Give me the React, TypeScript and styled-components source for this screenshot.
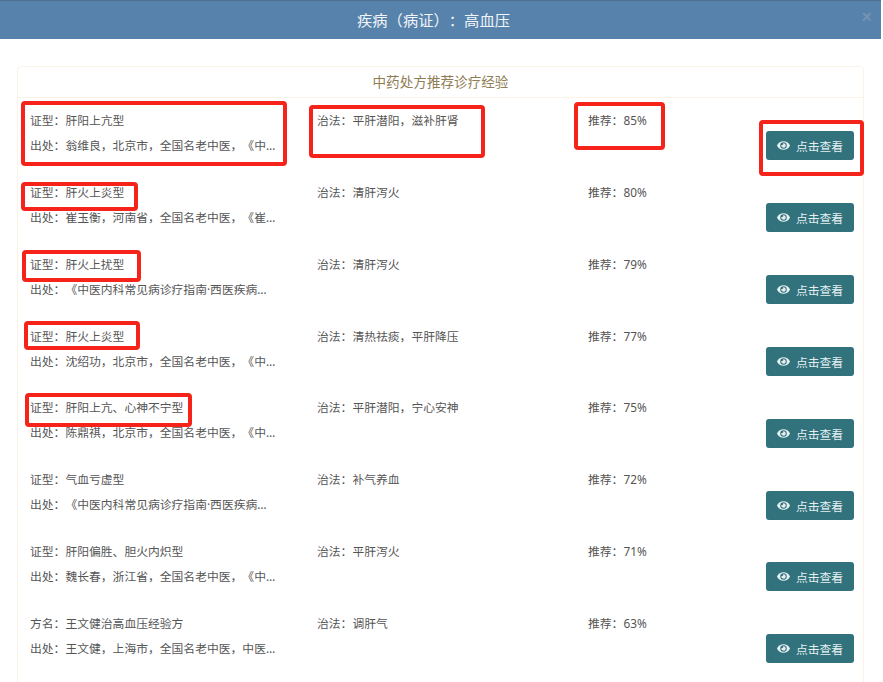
import React from 'react'
import styled, { createGlobalStyle } from 'styled-components'
import { FaEye } from 'react-icons/fa'

const GlobalStyle = createGlobalStyle`
  html, body { margin: 0; padding: 0; height: 100%; background: #fff; overflow: hidden; }
  body {
    font-family: "Noto Sans", "Noto Sans CJK SC", "Liberation Sans", sans-serif;
    color: #555;
    text-spacing-trim: space-all;
  }
`

const Page = styled.div`
  position: relative;
  width: 883px;
  height: 682px;
  overflow: hidden;
  background: #fff;
`

const Header = styled.header`
  position: relative;
  box-sizing: border-box;
  width: 881px;
  height: 39px;
  padding-right: 14px;
  border-top: 1px solid #4f6f8f;
  background: #5682ab;
  color: #f2f5f8;
  font-size: 15.3px;
  line-height: 38px;
  text-align: center;
`

const Close = styled.span`
  position: absolute;
  top: 5px;
  right: 9px;
  font-family: "Liberation Sans", sans-serif;
  font-size: 18px;
  line-height: 22px;
  font-weight: 700;
  color: #7393b3;
`

const Body = styled.main`
  padding: 27px 19px 0 17px;
`

const Card = styled.section`
  box-sizing: border-box;
  height: 640px;
  border: 1px solid #faf3e6;
  border-radius: 4px;
`

const CardTitle = styled.h2`
  margin: 0;
  height: 30px;
  border-bottom: 1px solid #faf3e6;
  color: #8f7d54;
  font-size: 13.6px;
  font-weight: 400;
  line-height: 29px;
  text-align: center;
`

const Row = styled.div`
  display: grid;
  grid-template-columns: 287px 271px 1fr auto;
  box-sizing: border-box;
  height: 71.85px;
  padding: 10px 9px 0 12px;
  font-size: 11.8px;
  line-height: 25px;
`

const Cell = styled.div`
  min-width: 0;
`

const Source = styled.div`
  width: 246px;
  overflow: hidden;
  white-space: nowrap;
  text-overflow: ellipsis;
`

const ViewButton = styled.button`
  display: flex;
  align-items: center;
  justify-content: center;
  gap: 6px;
  width: 88px;
  height: 29px;
  margin-top: 23.4px;
  padding: 0;
  border: 0;
  border-radius: 3px;
  background: #31727d;
  color: #e6f0f1;
  font-family: inherit;
  font-size: 11.8px;
`

const Mark = styled.div<{ $x: number; $y: number; $w: number; $h: number }>`
  position: absolute;
  box-sizing: border-box;
  left: ${p => p.$x}px;
  top: ${p => p.$y}px;
  width: ${p => p.$w}px;
  height: ${p => p.$h}px;
  border: 4px solid #f5231a;
  border-radius: 4px;
`

const rows = [
  { name: '证型：肝阳上亢型', source: '出处：翁维良，北京市，全国名老中医，《中医临床经验集》', method: '治法：平肝潜阳，滋补肝肾', rate: '推荐：85%' },
  { name: '证型：肝火上炎型', source: '出处：崔玉衡，河南省，全国名老中医，《崔玉衡临床经验集》', method: '治法：清肝泻火', rate: '推荐：80%' },
  { name: '证型：肝火上扰型', source: '出处：《中医内科常见病诊疗指南·西医疾病部分》', method: '治法：清肝泻火', rate: '推荐：79%' },
  { name: '证型：肝火上炎型', source: '出处：沈绍功，北京市，全国名老中医，《中医临床经验集》', method: '治法：清热祛痰，平肝降压', rate: '推荐：77%' },
  { name: '证型：肝阳上亢、心神不宁型', source: '出处：陈鼎祺，北京市，全国名老中医，《中医临床经验集》', method: '治法：平肝潜阳，宁心安神', rate: '推荐：75%' },
  { name: '证型：气血亏虚型', source: '出处：《中医内科常见病诊疗指南·西医疾病部分》', method: '治法：补气养血', rate: '推荐：72%' },
  { name: '证型：肝阳偏胜、胆火内炽型', source: '出处：魏长春，浙江省，全国名老中医，《中医临床经验集》', method: '治法：平肝泻火', rate: '推荐：71%' },
  { name: '方名：王文健治高血压经验方', source: '出处：王文健，上海市，全国名老中医，中医临床经验集', method: '治法：调肝气', rate: '推荐：63%' },
]

const marks = [
  { x: 21, y: 101, w: 266, h: 65 },
  { x: 309, y: 105, w: 176, h: 53 },
  { x: 574, y: 102, w: 91, h: 48 },
  { x: 759, y: 120, w: 105, h: 56 },
  { x: 21, y: 182, w: 117, h: 29 },
  { x: 22, y: 250, w: 119, h: 32 },
  { x: 24, y: 321, w: 116, h: 29 },
  { x: 25, y: 393, w: 167, h: 34 },
]

const App = () => (
  <Page>
    <GlobalStyle />
    <Header>
      疾病（病证）：高血压
      <Close>×</Close>
    </Header>
    <Body>
      <Card>
        <CardTitle>中药处方推荐诊疗经验</CardTitle>
        {rows.map((r, i) => (
          <Row key={i}>
            <Cell>
              <div>{r.name}</div>
              <Source>{r.source}</Source>
            </Cell>
            <Cell>{r.method}</Cell>
            <Cell>{r.rate}</Cell>
            <Cell>
              <ViewButton type="button">
                <FaEye size={13} />
                点击查看
              </ViewButton>
            </Cell>
          </Row>
        ))}
      </Card>
    </Body>
    {marks.map((m, i) => (
      <Mark key={i} $x={m.x} $y={m.y} $w={m.w} $h={m.h} />
    ))}
  </Page>
)

export default App
